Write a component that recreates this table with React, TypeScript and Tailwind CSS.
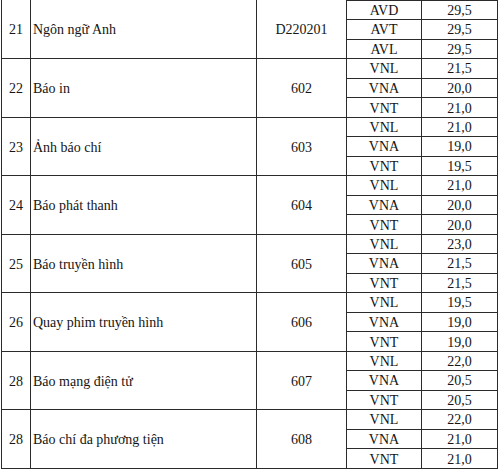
import React from "react";

type Group = { no: string; name: string; code: string; rows: [string, string][]; h: string };

const groups: Group[] = [
  { no: "21", name: "Ngôn ngữ Anh", code: "D220201", rows: [["AVD", "29,5"], ["AVT", "29,5"], ["AVL", "29,5"]], h: "h-[59px]" },
  { no: "22", name: "Báo in", code: "602", rows: [["VNL", "21,5"], ["VNA", "20,0"], ["VNT", "21,0"]], h: "h-[59px]" },
  { no: "23", name: "Ảnh báo chí", code: "603", rows: [["VNL", "21,0"], ["VNA", "19,0"], ["VNT", "19,5"]], h: "h-[58px]" },
  { no: "24", name: "Báo phát thanh", code: "604", rows: [["VNL", "21,0"], ["VNA", "20,0"], ["VNT", "20,0"]], h: "h-[59px]" },
  { no: "25", name: "Báo truyền hình", code: "605", rows: [["VNL", "23,0"], ["VNA", "21,5"], ["VNT", "21,5"]], h: "h-[58px]" },
  { no: "26", name: "Quay phim truyền hình", code: "606", rows: [["VNL", "19,5"], ["VNA", "19,0"], ["VNT", "19,0"]], h: "h-[59px]" },
  { no: "28", name: "Báo mạng điện tử", code: "607", rows: [["VNL", "22,0"], ["VNA", "20,5"], ["VNT", "20,5"]], h: "h-[58px]" },
  { no: "28", name: "Báo chí đa phương tiện", code: "608", rows: [["VNL", "22,0"], ["VNA", "21,0"], ["VNT", "21,0"]], h: "h-[59px]" },
];

export default function App() {
  return (
    <div className="w-[500px] h-[471px] bg-white overflow-hidden text-[14px] leading-none text-[#151515]" style={{ fontFamily: '"Liberation Serif", "Times New Roman", serif' }}>
      <div className="ml-[1px] w-[497px] border-l border-[#2b2b2b] flex flex-col">
        {groups.map((g, gi) => (
          <div key={gi} className={`flex ${g.h} border-b border-[#2b2b2b]`}>
            <div className="w-[29px] border-r border-[#2b2b2b] flex items-center justify-center pt-[2px]">{g.no}</div>
            <div className="w-[226px] border-r border-[#2b2b2b] flex items-center pl-[2px] pt-[2px]">{g.name}</div>
            <div className="w-[90px] border-r border-[#2b2b2b] flex items-center justify-center pt-[2px]">{g.code}</div>
            <div className={`w-[151px] flex flex-col ${gi === 0 ? "border-t border-[#2b2b2b]" : ""}`}>
              {g.rows.map((r, ri) => (
                <div key={ri} className={`flex flex-1 ${ri < 2 ? "border-b border-[#2b2b2b]" : ""}`}>
                  <div className="w-[75px] border-r border-[#2b2b2b] flex items-center justify-center pt-[2px]">{r[0]}</div>
                  <div className="w-[76px] border-r border-[#2b2b2b] flex items-center justify-center pt-[2px]">{r[1]}</div>
                </div>
              ))}
            </div>
          </div>
        ))}
      </div>
    </div>
  );
}
